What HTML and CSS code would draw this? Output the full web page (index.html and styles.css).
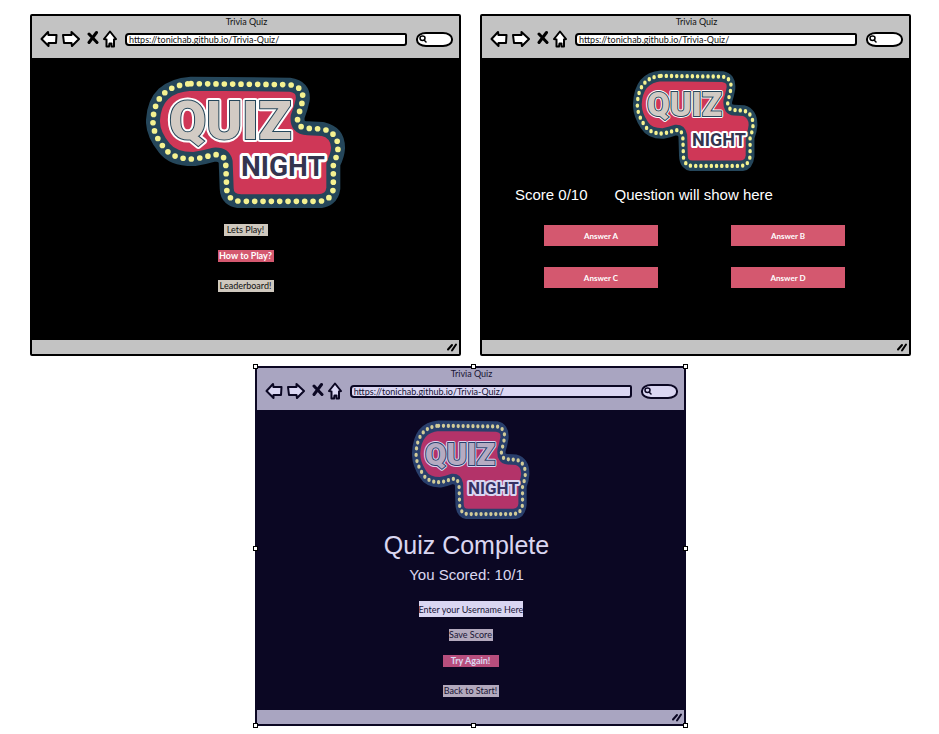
FILE: index.html
```html
<!DOCTYPE html>
<html lang="en">
<head>
<meta charset="utf-8">
<title>Trivia Quiz wireframes</title>
<link rel="stylesheet" href="styles.css">
</head>
<body>
<svg class="sprite" aria-hidden="true">
  <symbol id="board" viewBox="15 18 600 396" preserveAspectRatio="none">
    <path d="M150 41L445 44Q490 50 485 90Q480 115 470 140Q466 174 500 175L545 177Q592 188 591 235Q590 255 577 282L577 355Q572 393 530 394L300 394Q258 392 257 355L254 275Q248 252 218 254Q190 262 160 267Q95 268 70 234Q34 190 36 150Q42 48 150 41Z" fill="#cf3757" stroke="#25465a" stroke-width="42" stroke-linejoin="round"/>
    <path d="M150 41L445 44Q490 50 485 90Q480 115 470 140Q466 174 500 175L545 177Q592 188 591 235Q590 255 577 282L577 355Q572 393 530 394L300 394Q258 392 257 355L254 275Q248 252 218 254Q190 262 160 267Q95 268 70 234Q34 190 36 150Q42 48 150 41Z" fill="none" stroke="#f5f291" stroke-width="17" stroke-linecap="round" stroke-dasharray="0 25"/>
  </symbol>
  <symbol id="back" viewBox="0 0 18 18"><path d="M1.5 9L8 2L8.5 5L16.5 5L16 13L8.5 13L8.5 16Z"/></symbol>
  <symbol id="forward" viewBox="0 0 18 18"><path d="M17 9L9.5 2L9.5 5L1 5L2 13L9.5 13L10 16Z"/></symbol>
  <symbol id="stop" viewBox="0 0 12 18"><path d="M2 4L10 12.5M9.5 2.5L2 12.5" stroke-width="3"/></symbol>
  <symbol id="home" viewBox="0 0 14 18"><path d="M7 1.5L1 9L3.5 9.5L3.5 16.5L6 16.5L6.5 13.5L8.5 13.5L8.5 16.5L11 16.5L11 9.5L13 9Z"/></symbol>
  <symbol id="glass" viewBox="0 0 8 8"><path d="M6 3Q6 5.5 3.5 5.5Q1 5.5 1 3Q1 1 3.5 1Q6 1 6 3ZM5 5L7 7"/></symbol>
  <symbol id="grip" viewBox="0 0 12 10"><path d="M2 7.5L6 3M6 8.5L10 2.5" stroke-width="2"/></symbol>
</svg>

<main class="sheet">
  <section class="window">
    <header class="chrome">
      <div class="title">Trivia Quiz</div>
      <nav class="tools">
        <button class="tool" aria-label="Back"><svg class="icon arrow"><use href="#back"/></svg></button>
        <button class="tool forward" aria-label="Forward"><svg class="icon arrow"><use href="#forward"/></svg></button>
        <button class="tool" aria-label="Stop"><svg class="icon stop"><use href="#stop"/></svg></button>
        <button class="tool" aria-label="Home"><svg class="icon home"><use href="#home"/></svg></button>
        <input class="address" aria-label="Address" value="https://tonichab.github.io/Trivia-Quiz/">
        <label class="search"><svg class="icon glass"><use href="#glass"/></svg><input aria-label="Search"></label>
      </nav>
    </header>
    <div class="screen start">
      <svg class="logo logo-large" viewBox="0 0 200 132" role="img" aria-label="Quiz Night">
        <use href="#board" width="200" height="132"/>
        <g class="lettering">
          <text class="night halo" x="95" y="100" font-size="28">NIGHT</text>
          <text class="quiz halo" x="23" y="63" font-size="54">QUIZ</text>
          <text class="quiz" x="23" y="63" font-size="54">QUIZ</text>
          <text class="night" x="95" y="100" font-size="28">NIGHT</text>
        </g>
      </svg>
      <div class="menu">
        <button class="btn snug">Lets Play!</button>
        <button class="btn accent">How to Play?</button>
      </div>
      <button class="btn">Leaderboard!</button>
    </div>
    <footer class="status"><svg class="icon grip"><use href="#grip"/></svg></footer>
  </section>

  <section class="window">
    <header class="chrome">
      <div class="title">Trivia Quiz</div>
      <nav class="tools">
        <button class="tool" aria-label="Back"><svg class="icon arrow"><use href="#back"/></svg></button>
        <button class="tool forward" aria-label="Forward"><svg class="icon arrow"><use href="#forward"/></svg></button>
        <button class="tool" aria-label="Stop"><svg class="icon stop"><use href="#stop"/></svg></button>
        <button class="tool" aria-label="Home"><svg class="icon home"><use href="#home"/></svg></button>
        <input class="address" aria-label="Address" value="https://tonichab.github.io/Trivia-Quiz/">
        <label class="search"><svg class="icon glass"><use href="#glass"/></svg><input aria-label="Search"></label>
      </nav>
    </header>
    <div class="screen question">
      <svg class="logo logo-medium" viewBox="0 0 125 101" role="img" aria-label="Quiz Night">
        <use href="#board" width="125" height="101"/>
        <g class="lettering small">
          <text class="night halo" x="59" y="76" font-size="18">NIGHT</text>
          <text class="quiz halo" x="14" y="46" font-size="33">QUIZ</text>
          <text class="quiz" x="14" y="46" font-size="33">QUIZ</text>
          <text class="night" x="59" y="76" font-size="18">NIGHT</text>
        </g>
      </svg>
      <div class="prompt"><span>Score 0/10</span><span>Question will show here</span></div>
      <div class="answers">
        <button class="answer">Answer A</button>
        <button class="answer">Answer B</button>
        <button class="answer">Answer C</button>
        <button class="answer">Answer D</button>
      </div>
    </div>
    <footer class="status"><svg class="icon grip"><use href="#grip"/></svg></footer>
  </section>

  <section class="window selected">
    <header class="chrome">
      <div class="title">Trivia Quiz</div>
      <nav class="tools">
        <button class="tool" aria-label="Back"><svg class="icon arrow"><use href="#back"/></svg></button>
        <button class="tool forward" aria-label="Forward"><svg class="icon arrow"><use href="#forward"/></svg></button>
        <button class="tool" aria-label="Stop"><svg class="icon stop"><use href="#stop"/></svg></button>
        <button class="tool" aria-label="Home"><svg class="icon home"><use href="#home"/></svg></button>
        <input class="address" aria-label="Address" value="https://tonichab.github.io/Trivia-Quiz/">
        <label class="search"><svg class="icon glass"><use href="#glass"/></svg><input aria-label="Search"></label>
      </nav>
    </header>
    <div class="screen result">
      <svg class="logo logo-small" viewBox="0 0 118 99" role="img" aria-label="Quiz Night">
        <use href="#board" width="118" height="99"/>
        <g class="lettering small">
          <text class="night halo" x="56" y="74" font-size="17">NIGHT</text>
          <text class="quiz halo" x="13" y="45" font-size="31">QUIZ</text>
          <text class="quiz" x="13" y="45" font-size="31">QUIZ</text>
          <text class="night" x="56" y="74" font-size="17">NIGHT</text>
        </g>
      </svg>
      <h1 class="headline">Quiz Complete</h1>
      <p class="score">You Scored: 10/1</p>
      <input class="username" aria-label="Username" placeholder="Enter your Username Here">
      <div class="menu">
        <button class="btn snug">Save Score</button>
        <button class="btn accent">Try Again!</button>
      </div>
      <button class="btn">Back to Start!</button>
    </div>
    <footer class="status"><svg class="icon grip"><use href="#grip"/></svg></footer>
    <i class="handle top left"></i><i class="handle top center"></i><i class="handle top right"></i>
    <i class="handle middle left"></i><i class="handle middle right"></i>
    <i class="handle bottom left"></i><i class="handle bottom center"></i><i class="handle bottom right"></i>
  </section>
</main>
</body>
</html>
```
FILE: styles.css
```css
* { box-sizing: border-box; }
body {
  margin: 0;
  background: #fff;
  color: #111;
  font: 9px/12px Lato, "Liberation Sans", sans-serif;
}
button, input { font: inherit; color: inherit; border: 0; padding: 0; margin: 0; }
.sprite { position: absolute; width: 0; height: 0; }

.sheet {
  display: grid;
  grid-template-columns: 1fr 1fr;
  gap: 10px 19px;
  padding: 14px 28px 8px 30px;
}
.window {
  display: flex;
  flex-direction: column;
  border: 2px solid #000;
  border-radius: 2px;
  background: #000;
}

/* Browser chrome */
.chrome { background: #c3c3c3; padding: 0 6px 8px 8px; }
.title { text-align: center; }
.tools { display: flex; align-items: center; height: 22px; }
.tool { display: flex; background: none; margin-right: 4px; }
.tool.forward { margin-right: 7px; }
.icon { display: block; flex: none; fill: #fff; stroke: #000; stroke-width: 2; stroke-linejoin: round; stroke-linecap: round; }
.arrow { width: 18px; height: 18px; }
.stop { width: 12px; height: 18px; }
.home { width: 14px; height: 18px; }
.address {
  flex: 1;
  min-width: 0;
  height: 13px;
  margin: 0 9px 0 4px;
  padding: 0 2px;
  border: 2px solid #000;
  border-radius: 4px 2px 3px 4px;
  background: #fff;
  line-height: 9px;
}
.search {
  display: flex;
  align-items: center;
  width: 37px;
  height: 15px;
  padding: 0 1px;
  border: 2px solid #000;
  border-radius: 10px / 7px;
  background: #fff;
}
.search input { width: 100%; min-width: 0; height: 9px; background: transparent; }
.glass { width: 8px; height: 8px; stroke-width: 1.5; }
.status { display: flex; justify-content: flex-end; align-items: center; height: 14px; padding-right: 1px; background: #c3c3c3; }
.grip { width: 12px; height: 10px; }

/* Screens */
.screen { flex: 1; display: flex; flex-direction: column; align-items: center; color: #fff; }
.start { padding: 18px 0 48px; }
.question { padding-top: 12px; }
.result { padding: 10px 0 13px; }

.logo { display: block; }
.logo-large { width: 200px; height: 132px; }
.logo-medium { width: 125px; height: 101px; }
.logo-small { width: 118px; height: 99px; }
.lettering { font-family: Roboto, "Liberation Sans", sans-serif; }
.quiz { font-weight: 900; fill: #d2cbc4; stroke: #25465a; stroke-width: 2; paint-order: stroke; }
.night { font-weight: 700; fill: #34344f; }
.halo { fill: #fff; stroke: #fff; stroke-width: 6; stroke-linejoin: round; }
.small .halo { stroke-width: 4; }

.menu { display: flex; flex-direction: column; align-items: center; gap: 14px; margin: 16px 0 18px; }
.btn { min-width: 56px; height: 12px; background: #cfc8be; color: #111; line-height: 12px; }
.btn.accent { background: #d4586f; color: #fff; font-weight: 700; }
.btn.snug { min-width: 44px; }

.prompt {
  display: flex;
  gap: 27px;
  align-self: stretch;
  padding: 15px 33px 21px;
  font: 15px/18px "Liberation Sans", Arial, sans-serif;
}
.answers { display: grid; grid-template-columns: 1fr 1fr; gap: 21px 73px; align-self: stretch; padding: 0 64px 0 62px; }
.answer { height: 21px; background: #d4586f; color: #fff; font-size: 8px; font-weight: 700; }

.headline, .score { padding-right: 8px; font-family: "Liberation Sans", Arial, sans-serif; font-weight: 400; }
.headline { margin: 11px 0 0; font-size: 25px; line-height: 30px; }
.score { margin: 6px 0 17px; font-size: 15px; line-height: 18px; }
.username { width: 104px; height: 16px; background: #fff; color: #111; }
.username::placeholder { color: #111; opacity: 1; }
.result .menu { margin-top: 12px; }

/* Selected artboard */
.selected { grid-column: 1 / -1; position: relative; width: 49%; margin: 0 auto; }
.selected::after {
  content: "";
  position: absolute;
  inset: -2px;
  background: rgba(58, 37, 184, .19);
  pointer-events: none;
}
.handle { position: absolute; z-index: 1; width: 5px; height: 5px; border: 1px solid #000; background: #fff; }
.handle.top { top: -4px; }
.handle.middle { top: 50%; }
.handle.bottom { bottom: -4px; }
.handle.left { left: -4px; }
.handle.center { left: 50%; }
.handle.right { right: -4px; }
```
